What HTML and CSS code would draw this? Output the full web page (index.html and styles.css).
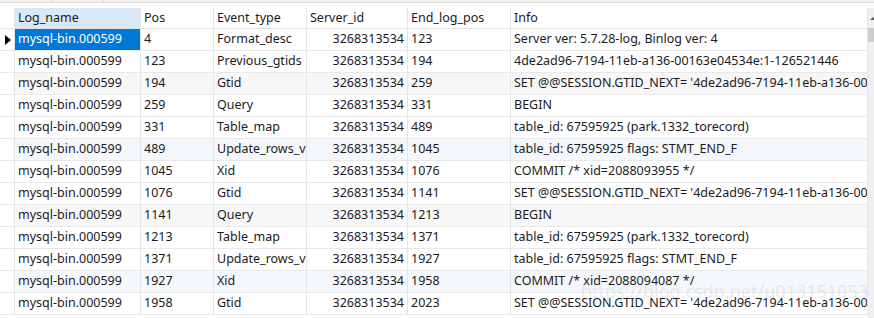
FILE: index.html
```html
<!DOCTYPE html>
<html>
<head>
	<title>binlog events</title>
	<link rel="stylesheet" href="styles.css">
</head>
<body>
	<div class="tabbar"><span class="tab"></span><span class="tab"></span></div>
	<div class="grid-wrap">
		<div class="grid">
			<div class="row head">
				<div class="cell ind"></div>
				<div class="cell col-sel">Log_name</div>
				<div class="cell">Pos</div>
				<div class="cell">Event_type</div>
				<div class="cell">Server_id</div>
				<div class="cell">End_log_pos</div>
				<div class="cell">Info</div>
			</div>
			<div class="row">
				<div class="cell ind"><span class="arrow"></span></div>
				<div class="cell selected">mysql-bin.000599</div>
				<div class="cell">4</div>
				<div class="cell">Format_desc</div>
				<div class="cell num">3268313534</div>
				<div class="cell">123</div>
				<div class="cell">Server ver: 5.7.28-log, Binlog ver: 4</div>
			</div>
			<div class="row">
				<div class="cell ind"></div>
				<div class="cell">mysql-bin.000599</div>
				<div class="cell">123</div>
				<div class="cell">Previous_gtids</div>
				<div class="cell num">3268313534</div>
				<div class="cell">194</div>
				<div class="cell">4de2ad96-7194-11eb-a136-00163e04534e:1-126521446</div>
			</div>
			<div class="row gray">
				<div class="cell ind"></div>
				<div class="cell">mysql-bin.000599</div>
				<div class="cell">194</div>
				<div class="cell">Gtid</div>
				<div class="cell num">3268313534</div>
				<div class="cell">259</div>
				<div class="cell">SET @@SESSION.GTID_NEXT= '4de2ad96-7194-11eb-a136-00163e04534e:126521447'</div>
			</div>
			<div class="row">
				<div class="cell ind"></div>
				<div class="cell">mysql-bin.000599</div>
				<div class="cell">259</div>
				<div class="cell">Query</div>
				<div class="cell num">3268313534</div>
				<div class="cell">331</div>
				<div class="cell">BEGIN</div>
			</div>
			<div class="row">
				<div class="cell ind"></div>
				<div class="cell">mysql-bin.000599</div>
				<div class="cell">331</div>
				<div class="cell">Table_map</div>
				<div class="cell num">3268313534</div>
				<div class="cell">489</div>
				<div class="cell">table_id: 67595925 (park.1332_torecord)</div>
			</div>
			<div class="row blue">
				<div class="cell ind"></div>
				<div class="cell">mysql-bin.000599</div>
				<div class="cell">489</div>
				<div class="cell">Update_rows_v1</div>
				<div class="cell num">3268313534</div>
				<div class="cell">1045</div>
				<div class="cell">table_id: 67595925 flags: STMT_END_F</div>
			</div>
			<div class="row">
				<div class="cell ind"></div>
				<div class="cell">mysql-bin.000599</div>
				<div class="cell">1045</div>
				<div class="cell">Xid</div>
				<div class="cell num">3268313534</div>
				<div class="cell">1076</div>
				<div class="cell">COMMIT /* xid=2088093955 */</div>
			</div>
			<div class="row">
				<div class="cell ind"></div>
				<div class="cell">mysql-bin.000599</div>
				<div class="cell">1076</div>
				<div class="cell">Gtid</div>
				<div class="cell num">3268313534</div>
				<div class="cell">1141</div>
				<div class="cell">SET @@SESSION.GTID_NEXT= '4de2ad96-7194-11eb-a136-00163e04534e:126521448'</div>
			</div>
			<div class="row gray">
				<div class="cell ind"></div>
				<div class="cell">mysql-bin.000599</div>
				<div class="cell">1141</div>
				<div class="cell">Query</div>
				<div class="cell num">3268313534</div>
				<div class="cell">1213</div>
				<div class="cell">BEGIN</div>
			</div>
			<div class="row">
				<div class="cell ind"></div>
				<div class="cell">mysql-bin.000599</div>
				<div class="cell">1213</div>
				<div class="cell">Table_map</div>
				<div class="cell num">3268313534</div>
				<div class="cell">1371</div>
				<div class="cell">table_id: 67595925 (park.1332_torecord)</div>
			</div>
			<div class="row">
				<div class="cell ind"></div>
				<div class="cell">mysql-bin.000599</div>
				<div class="cell">1371</div>
				<div class="cell">Update_rows_v1</div>
				<div class="cell num">3268313534</div>
				<div class="cell">1927</div>
				<div class="cell">table_id: 67595925 flags: STMT_END_F</div>
			</div>
			<div class="row blue">
				<div class="cell ind"></div>
				<div class="cell">mysql-bin.000599</div>
				<div class="cell">1927</div>
				<div class="cell">Xid</div>
				<div class="cell num">3268313534</div>
				<div class="cell">1958</div>
				<div class="cell">COMMIT /* xid=2088094087 */</div>
			</div>
			<div class="row">
				<div class="cell ind"></div>
				<div class="cell">mysql-bin.000599</div>
				<div class="cell">1958</div>
				<div class="cell">Gtid</div>
				<div class="cell num">3268313534</div>
				<div class="cell">2023</div>
				<div class="cell">SET @@SESSION.GTID_NEXT= '4de2ad96-7194-11eb-a136-00163e04534e:126521449'</div>
			</div>
		</div>
		<div class="scrollbar">
			<span class="up"></span>
			<span class="thumb"></span>
		</div>
		<span class="watermark">https://blog.csdn.net/u013151053</span>
	</div>
</body>
</html>
```

FILE: styles.css
```css
body{
	margin: 0;
	background: white;
	font-family: 'Noto Sans', 'Liberation Sans', sans-serif;
	font-size: 12.5px;
	color: #1b1b1b;
	overflow: hidden;
}
.tabbar{
	height: 2px;
	background: #f3f3f3;
	border-bottom: 1px solid #dcdcdc;
	display: flex;
	margin-bottom: 5px;
}
.tab{
	width: 51px;
	border-right: 1px solid #dcdcdc;
}
.grid-wrap{
	position: relative;
	display: flex;
}
.grid{
	width: 868px;
	flex: none;
}
.row{
	display: grid;
	grid-template-columns: 15px 126px 73px 93px 101px 103px 357px;
	height: 22px;
}
.row.head{
	height: 21px;
}
.cell{
	box-sizing: border-box;
	border-right: 1px solid #e6e6e6;
	border-bottom: 1px solid #e9e9e9;
	padding: 0 3px;
	line-height: 20px;
	white-space: nowrap;
	overflow: hidden;
}
.head .cell{
	line-height: 19px;
	border-bottom-color: #e2e2e2;
}
.cell.ind{
	padding: 0;
	display: flex;
	align-items: center;
	justify-content: center;
	background: white;
}
.col-sel{
	background: #d9e8f6;
}
.selected{
	background: #0078d7;
	color: white;
}
.num{
	text-align: right;
}
.gray .cell{
	background: #f7f7f7;
}
.blue .cell{
	background: #f4f8fd;
}
.gray .cell.ind, .blue .cell.ind{
	background: white;
}
.arrow{
	width: 0;
	height: 0;
	border-top: 5px solid transparent;
	border-bottom: 5px solid transparent;
	border-left: 6px solid black;
	margin-left: 1px;
}
.scrollbar{
	flex: 1;
	background: #f0f0f0;
	height: 310px;
	display: flex;
	flex-direction: column;
	align-items: flex-start;
	position: relative;
	z-index: 1;
}
.scrollbar .up{
	width: 0;
	height: 0;
	margin: 9px 0 0 2px;
	border-left: 3px solid transparent;
	border-right: 3px solid transparent;
	border-bottom: 3px solid #606060;
}
.scrollbar .thumb{
	margin-top: 8px;
	width: 100%;
	height: 14px;
	background: #cdcdcd;
}
.watermark{
	position: absolute;
	right: 6px;
	top: 271px;
	font-size: 18px;
	color: rgba(190, 190, 190, 0.3);
	white-space: nowrap;
	pointer-events: none;
}
```
